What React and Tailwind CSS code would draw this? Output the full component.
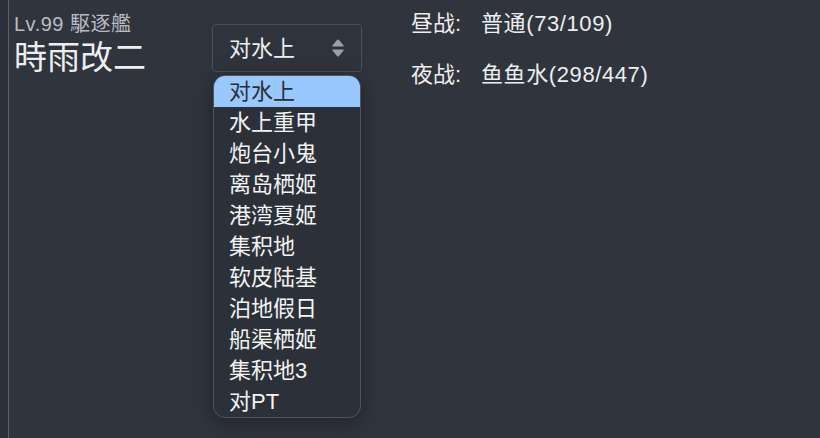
const items = ["对水上","水上重甲","炮台小鬼","离岛栖姬","港湾夏姬","集积地","软皮陆基","泊地假日","船渠栖姬","集积地3","对PT"];

export default function App() {
  return (
    <div className="w-[820px] h-[438px] bg-[#30343d] overflow-hidden flex" style={{fontFamily: '"Liberation Sans", "Noto Sans CJK SC", sans-serif'}}>
      <div className="w-[8px] h-full bg-[#2c3038]"></div>
      <div className="w-[1px] h-full bg-[#5b5f68]"></div>
      <div className="flex-1 flex">
        <div className="pl-[5px] pt-[12px] w-[203px]">
          <div className="text-[20px] leading-[24px] text-[#b9bcc2] tracking-[0.5px]">Lv.99 駆逐艦</div>
          <div className="text-[33px] leading-[40px] text-[#eceef0] mt-[2px]">時雨改二</div>
        </div>
        <div className="pt-[24px] w-[199px] flex flex-col items-start">
          <div className="w-[150px] h-[48px] border border-[#4b5059] rounded-[4px] bg-[#2f333b] flex items-center justify-between pl-[16px] pr-[16px]">
            <span className="text-[22px] text-[#eceef0]">对水上</span>
            <svg width="14" height="20" viewBox="0 0 14 20">
              <path d="M7 1.5 Q7.6 1.5 8 2 L12.6 7.4 Q13.2 8.4 12 8.6 L2 8.6 Q0.8 8.4 1.4 7.4 L6 2 Q6.4 1.5 7 1.5 Z" fill="#9ca0a6"/>
              <path d="M7 18.5 Q7.6 18.5 8 18 L12.6 12.6 Q13.2 11.6 12 11.4 L2 11.4 Q0.8 11.6 1.4 12.6 L6 18 Q6.4 18.5 7 18.5 Z" fill="#9ca0a6"/>
            </svg>
          </div>
          <div className="mt-[3px] ml-[1px] w-[148px] border border-[#50545c] rounded-[12px] bg-[#2c3038] overflow-hidden shadow-[0_4px_20px_rgba(0,0,0,0.35)]">
            {items.map((t, i) => (
              <div key={t} className={`h-[31px] flex items-center pl-[15px] text-[22px] ${i === 0 ? "bg-[#99c8ff] text-[#2b2f36]" : "text-[#f2f3f5]"}`}>{t}</div>
            ))}
          </div>
        </div>
        <div className="pt-[8px] text-[22px] text-[#eceef0]">
          <div className="flex h-[30px] items-center"><span className="w-[70px]">昼战:</span><span className="tracking-[0.6px]">普通(73/109)</span></div>
          <div className="flex h-[30px] items-center mt-[21px]"><span className="w-[70px]">夜战:</span><span className="tracking-[0.6px]">鱼鱼水(298/447)</span></div>
        </div>
      </div>
    </div>
  );
}
